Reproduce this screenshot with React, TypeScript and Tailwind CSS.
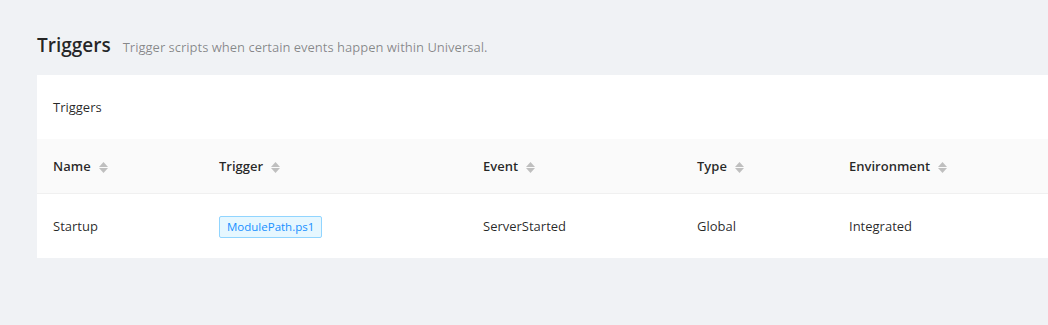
import React from "react";

const font = { fontFamily: '"Open Sans", "Noto Sans", sans-serif' };

function Sorter() {
  return (
    <span className="ml-[8px] inline-flex flex-col items-center justify-center gap-[1px]">
      <svg width="9" height="5" viewBox="0 0 9 5">
        <path d="M4.5 0 L9 5 L0 5 Z" fill="#bfbfbf" />
      </svg>
      <svg width="9" height="5" viewBox="0 0 9 5">
        <path d="M0 0 L9 0 L4.5 5 Z" fill="#bfbfbf" />
      </svg>
    </span>
  );
}

const cols = [
  { name: "Name", w: "w-[166px]" },
  { name: "Trigger", w: "w-[264px]" },
  { name: "Event", w: "w-[214px]" },
  { name: "Type", w: "w-[152px]" },
  { name: "Environment", w: "w-[300px]" },
];

export default function App() {
  return (
    <div className="w-[1048px] h-[325px] overflow-hidden bg-[#f0f2f5]" style={font}>
      <div className="pl-[37px] pt-[31px]">
        <div className="flex items-baseline h-[28px]">
          <span className="text-[19px] leading-[28px] font-semibold text-[rgba(0,0,0,0.85)]">Triggers</span>
          <span className="ml-[12px] text-[13px] text-[rgba(0,0,0,0.45)]">
            Trigger scripts when certain events happen within Universal.
          </span>
        </div>
        <div className="mt-[16px] w-[1100px] bg-white">
          <div className="h-[64px] flex items-center pt-[2px] px-[16px] text-[13px] text-[rgba(0,0,0,0.85)]">Triggers</div>
          <div className="flex h-[55px] pt-[2px] bg-[#fafafa] border-b border-[#f0f0f0]">
            {cols.map((c) => (
              <div key={c.name} className={`${c.w} flex items-center px-[16px] text-[13px] font-semibold text-[rgba(0,0,0,0.85)]`}>
                {c.name}
                <Sorter />
              </div>
            ))}
          </div>
          <div className="flex h-[64px] pt-[2px] text-[13px] text-[rgba(0,0,0,0.85)]">
            <div className="w-[166px] flex items-center px-[16px]">Startup</div>
            <div className="w-[264px] flex items-center px-[16px]">
              <span className="inline-flex items-center h-[22px] px-[7px] text-[11.5px] text-[#1890ff] bg-[#e6f7ff] border border-[#91d5ff] rounded-[2px]">
                ModulePath.ps1
              </span>
            </div>
            <div className="w-[214px] flex items-center px-[16px]">ServerStarted</div>
            <div className="w-[152px] flex items-center px-[16px]">Global</div>
            <div className="w-[300px] flex items-center px-[16px]">Integrated</div>
          </div>
        </div>
      </div>
    </div>
  );
}
